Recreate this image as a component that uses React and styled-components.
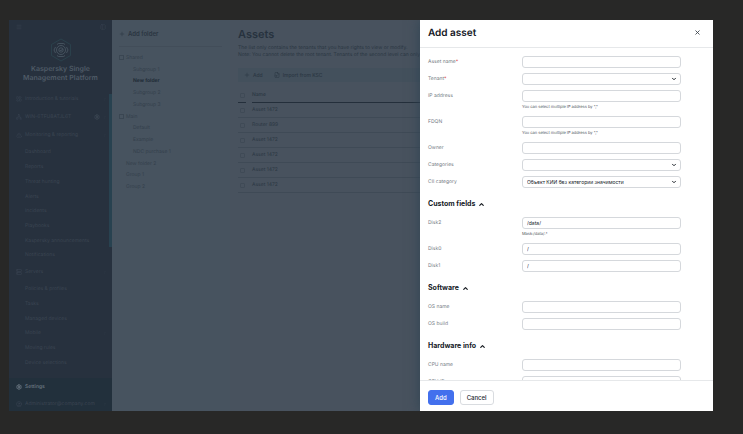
import React, { useId } from "react";
import styled, { createGlobalStyle, css } from "styled-components";
import { LayoutDashboard, Network, TriangleAlert, Server, Settings, CircleUser, Menu, PanelLeft, Plus, FileInput, X, ChevronUp, ChevronDown, ChevronRight } from "lucide-react";

const Global = createGlobalStyle`
  *, *::before, *::after { box-sizing: border-box; }
  html { background: #282827; }
  body { margin: 0; font-family: Inter, "Noto Sans", sans-serif; font-size: 5px; line-height: 8px; color: #1d2733; text-rendering: geometricPrecision; }
  button, input, select { font: inherit; color: inherit; margin: 0; }
  button { background: none; border: 0; padding: 0; cursor: pointer; }
  h1, h2, h3, p, ul { margin: 0; padding: 0; }
  ul { list-style: none; }
  a { color: inherit; text-decoration: none; }
`;

const Page = styled.div`
  display: flex;
  height: 100vh;
  padding: 20px 30px 23px 9px;
`;

const Frame = styled.div`
  position: relative;
  display: flex;
  flex: 1;
  min-width: 0;
  overflow: hidden;
  background: #48525e;
`;

const Sidebar = styled.aside`
  display: flex;
  flex-direction: column;
  flex: none;
  width: 103px;
  background: #27313e;
  color: #3b4552;
`;

const SideTop = styled.div`
  display: flex;
  justify-content: space-between;
  padding: 4px 6px 0 7px;
`;

const Brand = styled.div`
  display: flex;
  flex-direction: column;
  align-items: center;
  gap: 2px;
  height: 60px;
  padding-top: 8px;
  text-align: center;
  font-size: 7px;
  font-weight: 600;
  line-height: 9px;
  color: #4f5b67;
`;

const Nav = styled.nav`
  display: flex;
  flex-direction: column;
  flex: 1;
  min-height: 0;
  padding-bottom: 8px;
  border-right: 3px solid transparent;
  background: linear-gradient(#284250, #284250) right 4px / 3px 153px no-repeat border-box;
`;

const NavItem = styled.a`
  display: flex;
  align-items: center;
  gap: 3px;
  flex: none;
  height: 18px;
  padding: 0 2px 0 7px;
  white-space: nowrap;
  color: ${(p) => (p.$bright ? "#66727e" : "inherit")};
  font-weight: ${(p) => (p.$bright ? 600 : 400)};
  span { flex: 1; min-width: 0; }
  svg { flex: none; }
`;

const SubList = styled.ul`
  display: flex;
  flex-direction: column;
  flex: ${(p) => p.$rows} 1 0;
  padding-top: 1px;
  li { display: flex; align-items: center; justify-content: space-between; flex: 1; padding: 0 2px 0 16px; }
`;

const SideBottom = styled.div`
  display: flex;
  flex-direction: column;
  flex: none;
  height: 33px;
  background: #22303c;
  ${NavItem} { height: 17px; padding-right: 5px; }
`;

const Folders = styled.section`
  flex: none;
  width: 118px;
  padding: 8px 8px 0 7px;
  background: #47535f;
  color: #34404c;
`;

const AddFolder = styled.button`
  display: flex;
  align-items: center;
  gap: 3px;
  width: 100%;
  height: 19px;
  padding-bottom: 6px;
  border-bottom: 1px solid #424d59;
  font-size: 6px;
  font-weight: 600;
  color: #2a3541;
`;

const Tree = styled.ul`
  display: grid;
  grid-auto-rows: 1fr;
  height: 141px;
  margin-top: 5px;
`;

const TreeItem = styled.li`
  display: flex;
  align-items: center;
  gap: 2px;
  padding-left: ${(p) => [0, 7, 14][p.$level]}px;
  color: ${(p) => (p.$active ? "#212c37" : "inherit")};
  font-weight: ${(p) => (p.$active ? 700 : 400)};
`;

const Toggle = styled.button`
  width: 5px;
  height: 5px;
  border: 1px solid #3a4652;
  line-height: 0;
`;

const Main = styled.main`
  flex: 1;
  min-width: 0;
  padding: 7px 0 0 8px;
  color: #2b3743;
  white-space: nowrap;
  overflow: hidden;
`;

const Title = styled.h1`
  margin-bottom: 3px;
  font-size: 11px;
  font-weight: 600;
  line-height: 15px;
  color: #27323e;
`;

const Intro = styled.p`
  line-height: 7px;
`;

const Toolbar = styled.div`
  display: flex;
  align-items: center;
  gap: 11px;
  height: 14px;
  margin-top: 9px;
  padding-left: 6px;
  background: #43505c;
`;

const Tool = styled.button`
  display: flex;
  align-items: center;
  gap: 3px;
  font-weight: 500;
`;

const Table = styled.table`
  width: 100%;
  margin-top: 6px;
  border-collapse: separate;
  border-spacing: 0;
  th, td { height: 15px; padding: 0; text-align: left; border-bottom: 1px solid #3f4a56; }
  th { font-weight: 500; border-bottom-color: #242f3b; }
  th:first-child, td:first-child { width: 14px; }
  th:first-child { border-bottom: 0; background: linear-gradient(#242f3b, #242f3b) left bottom / 8px 1px no-repeat; }
`;

const Check = styled.input`
  display: block;
  appearance: none;
  width: 5px;
  height: 5px;
  margin: 0 0 0 2px;
  border: 1px solid #3f4a56;
  border-radius: 1px;
`;

const Drawer = styled.form`
  position: absolute;
  inset: 0 0 0 auto;
  display: flex;
  flex-direction: column;
  width: 293px;
  background: #fff;
  box-shadow: 0 0 12px #2f4453;
`;

const DrawerHeader = styled.header`
  display: flex;
  align-items: center;
  justify-content: space-between;
  flex: none;
  height: 28px;
  padding: 0 12px 2px 8px;
  border-bottom: 1px solid #e6e8ea;
  h2 { font-size: 10px; font-weight: 600; line-height: 14px; color: #14181f; }
`;

const CloseButton = styled.button`
  display: flex;
  color: #3c434b;
`;

const Body = styled.div`
  flex: 1;
  min-height: 0;
  overflow-y: auto;
  scrollbar-width: none;
  padding: 8px 32px 0 8px;
`;

const Fields = styled.div`
  display: flex;
  flex-direction: column;
  gap: 5px;
`;

const Row = styled.div`
  display: grid;
  grid-template-columns: 94px 1fr;
  align-items: center;
`;

const Label = styled.label`
  color: #757c84;
  em { font-style: normal; color: #e0474c; }
`;

const control = css`
  display: block;
  width: 100%;
  height: 12px;
  padding: 0 4px;
  border: 1px solid #d5d8dc;
  border-radius: 3px;
  background: #fff;
  line-height: 8px;
  color: #14191f;
  outline: none;
`;

const TextInput = styled.input`${control}`;

const Select = styled.select`
  ${control}
  appearance: none;
`;

const SelectBox = styled.div`
  display: grid;
  align-items: center;
  > * { grid-area: 1 / 1; }
  svg { justify-self: end; margin-right: 4px; pointer-events: none; color: #23292f; }
`;

const Hint = styled.p`
  grid-column: 2;
  height: 9px;
  font-size: 4px;
  line-height: 10px;
  color: #4a5159;
`;

const SectionTitle = styled.h3`
  margin: 10px 0 7px;
  line-height: 12px;
  font-size: 7px;
  font-weight: 700;
  color: #14191f;
  button { display: flex; align-items: center; gap: 3px; }
`;

const Footer = styled.footer`
  display: flex;
  gap: 6px;
  flex: none;
  height: 31px;
  padding: 9px 8px 0;
  border-top: 1px solid #e6e8ea;
`;

const Button = styled.button`
  height: 15px;
  padding: 0 6px;
  border: 1px solid ${(p) => (p.$primary ? "#4370ed" : "#d9dce0")};
  border-radius: 3px;
  background: ${(p) => (p.$primary ? "#4370ed" : "#fff")};
  color: ${(p) => (p.$primary ? "#fff" : "#20262d")};
  font-size: 6px;
  font-weight: 500;
`;

function Logo() {
  return (
    <svg width="22" height="24" viewBox="0 0 22 24" fill="none" stroke="#2c4852" strokeWidth="0.7">
      <path d="M11 1 20.5 6.500V17.500L11 23 1.500 17.500V6.500Z" />
      <g stroke="#52606c">
        <circle cx="11" cy="12" r="4.500" />
        <circle cx="11" cy="12" r="2.200" />
        <path d="m9.800 12 1 1 1.700-2M7 6.500l1.500-1h5l1.500 1M7 17.500l1.500 1h5l1.500-1M5.500 9 4 12l1.500 3M16.500 9l1.500 3-1.500 3" />
      </g>
    </svg>
  );
}

function Field({ label, required, value = "", hint, select }) {
  const id = useId();
  return (
    <Row>
      <Label htmlFor={id}>{label}{required && <em>*</em>}</Label>
      {select ? (
        <SelectBox>
          <Select id={id} defaultValue={value}><option value={value}>{value}</option></Select>
          <ChevronDown size={6} strokeWidth={4} />
        </SelectBox>
      ) : (
        <TextInput id={id} defaultValue={value} />
      )}
      {hint && <Hint>{hint}</Hint>}
    </Row>
  );
}

function Section({ title, fields }) {
  return (
    <section>
      {title && <SectionTitle><button type="button">{title}<ChevronUp size={7} strokeWidth={4} /></button></SectionTitle>}
      <Fields>{fields.map((f) => <Field key={f.label} {...f} />)}</Fields>
    </section>
  );
}

const ipHint = 'You can select multiple IP address by ","';
const sections = [
  { fields: [
    { label: "Asset name", required: true },
    { label: "Tenant", required: true, select: true },
    { label: "IP address", hint: ipHint },
    { label: "FDQN", hint: ipHint },
    { label: "Owner" },
    { label: "Categories", select: true },
    { label: "CII category", select: true, value: "Объект КИИ без категории значимости" },
  ] },
  { title: "Custom fields", fields: [
    { label: "Disk2", value: "/data/", hint: "Mask:/data/.*" },
    { label: "Disk0", value: "/" },
    { label: "Disk1", value: "/" },
  ] },
  { title: "Software", fields: [{ label: "OS name" }, { label: "OS build" }] },
  { title: "Hardware info", fields: [{ label: "CPU name" }, { label: "CPU ID" }] },
];

const monitoring = ["Dashboard", "Reports", "Threat hunting", "Alerts", "Incidents", "Playbooks", "Kaspersky announcements", "Notifications"];
const servers = ["Policies & profiles", "Tasks", "Managed devices", "Mobile", "Moving rules", "Device selections"];
const folders = [
  ["Shared", 0, true], ["Subgroup 1", 2], ["New folder", 2, false, true], ["Subgroup 2", 2], ["Subgroup 3", 2],
  ["Main", 0, true], ["Default", 2], ["Example", 2], ["NDC purchase 1", 2],
  ["New folder 2", 1], ["Group 1", 1], ["Group 2", 1],
];
const assets = ["Asset 1472", "Router 899", "Asset 1472", "Asset 1472", "Asset 1472", "Asset 1472"];

export default function App() {
  return (
    <Page>
      <Global />
      <Frame>
        <Sidebar>
          <SideTop><Menu size={6} /><PanelLeft size={6} /></SideTop>
          <Brand><Logo /><div>Kaspersky Single<br />Management Platform</div></Brand>
          <Nav>
            <NavItem href="#"><LayoutDashboard size={6} /><span>Introduction & tutorials</span><ChevronRight size={4} /></NavItem>
            <NavItem href="#"><Network size={6} /><span>WIN-6TFU8ATJL6T</span><Settings size={6} strokeWidth={4} /><ChevronRight size={4} /></NavItem>
            <NavItem href="#"><TriangleAlert size={6} /><span>Monitoring & reporting</span><ChevronRight size={4} /></NavItem>
            <SubList $rows={8}>{monitoring.map((t) => <li key={t}><a href="#">{t}</a></li>)}</SubList>
            <NavItem href="#"><Server size={6} /><span>Servers</span><ChevronRight size={4} /></NavItem>
            <SubList $rows={6}>{servers.map((t) => <li key={t}><a href="#">{t}</a>{t === "Mobile" && <ChevronRight size={4} />}</li>)}</SubList>
          </Nav>
          <SideBottom>
            <NavItem href="#" $bright><Settings size={6} strokeWidth={4} /><span>Settings</span></NavItem>
            <NavItem href="#"><CircleUser size={6} /><span>Administrator@company.com</span><ChevronRight size={4} /></NavItem>
          </SideBottom>
        </Sidebar>
        <Folders>
          <AddFolder><Plus size={6} />Add folder</AddFolder>
          <Tree>
            {folders.map(([name, level, open, active]) => (
              <TreeItem key={name} $level={level} $active={active}>
                {open && <Toggle aria-label={`Collapse ${name}`} />}
                {name}
              </TreeItem>
            ))}
          </Tree>
        </Folders>
        <Main>
          <Title>Assets</Title>
          <Intro>The list only contains the tenants that you have rights to view or modify.<br />Note: You cannot delete the root tenant. Tenants of the second level can only be</Intro>
          <Toolbar>
            <Tool><Plus size={6} />Add</Tool>
            <Tool><FileInput size={6} />Import from KSC</Tool>
          </Toolbar>
          <Table>
            <thead><tr><th><Check type="checkbox" aria-label="Select all" /></th><th>Name</th></tr></thead>
            <tbody>
              {assets.map((name, i) => (
                <tr key={i}><td><Check type="checkbox" aria-label={`Select ${name}`} /></td><td>{name}</td></tr>
              ))}
            </tbody>
          </Table>
        </Main>
        <Drawer onSubmit={(e) => e.preventDefault()}>
          <DrawerHeader>
            <h2>Add asset</h2>
            <CloseButton type="button" aria-label="Close"><X size={7} strokeWidth={3} /></CloseButton>
          </DrawerHeader>
          <Body>{sections.map((s, i) => <Section key={i} {...s} />)}</Body>
          <Footer>
            <Button $primary>Add</Button>
            <Button type="button">Cancel</Button>
          </Footer>
        </Drawer>
      </Frame>
    </Page>
  );
}
